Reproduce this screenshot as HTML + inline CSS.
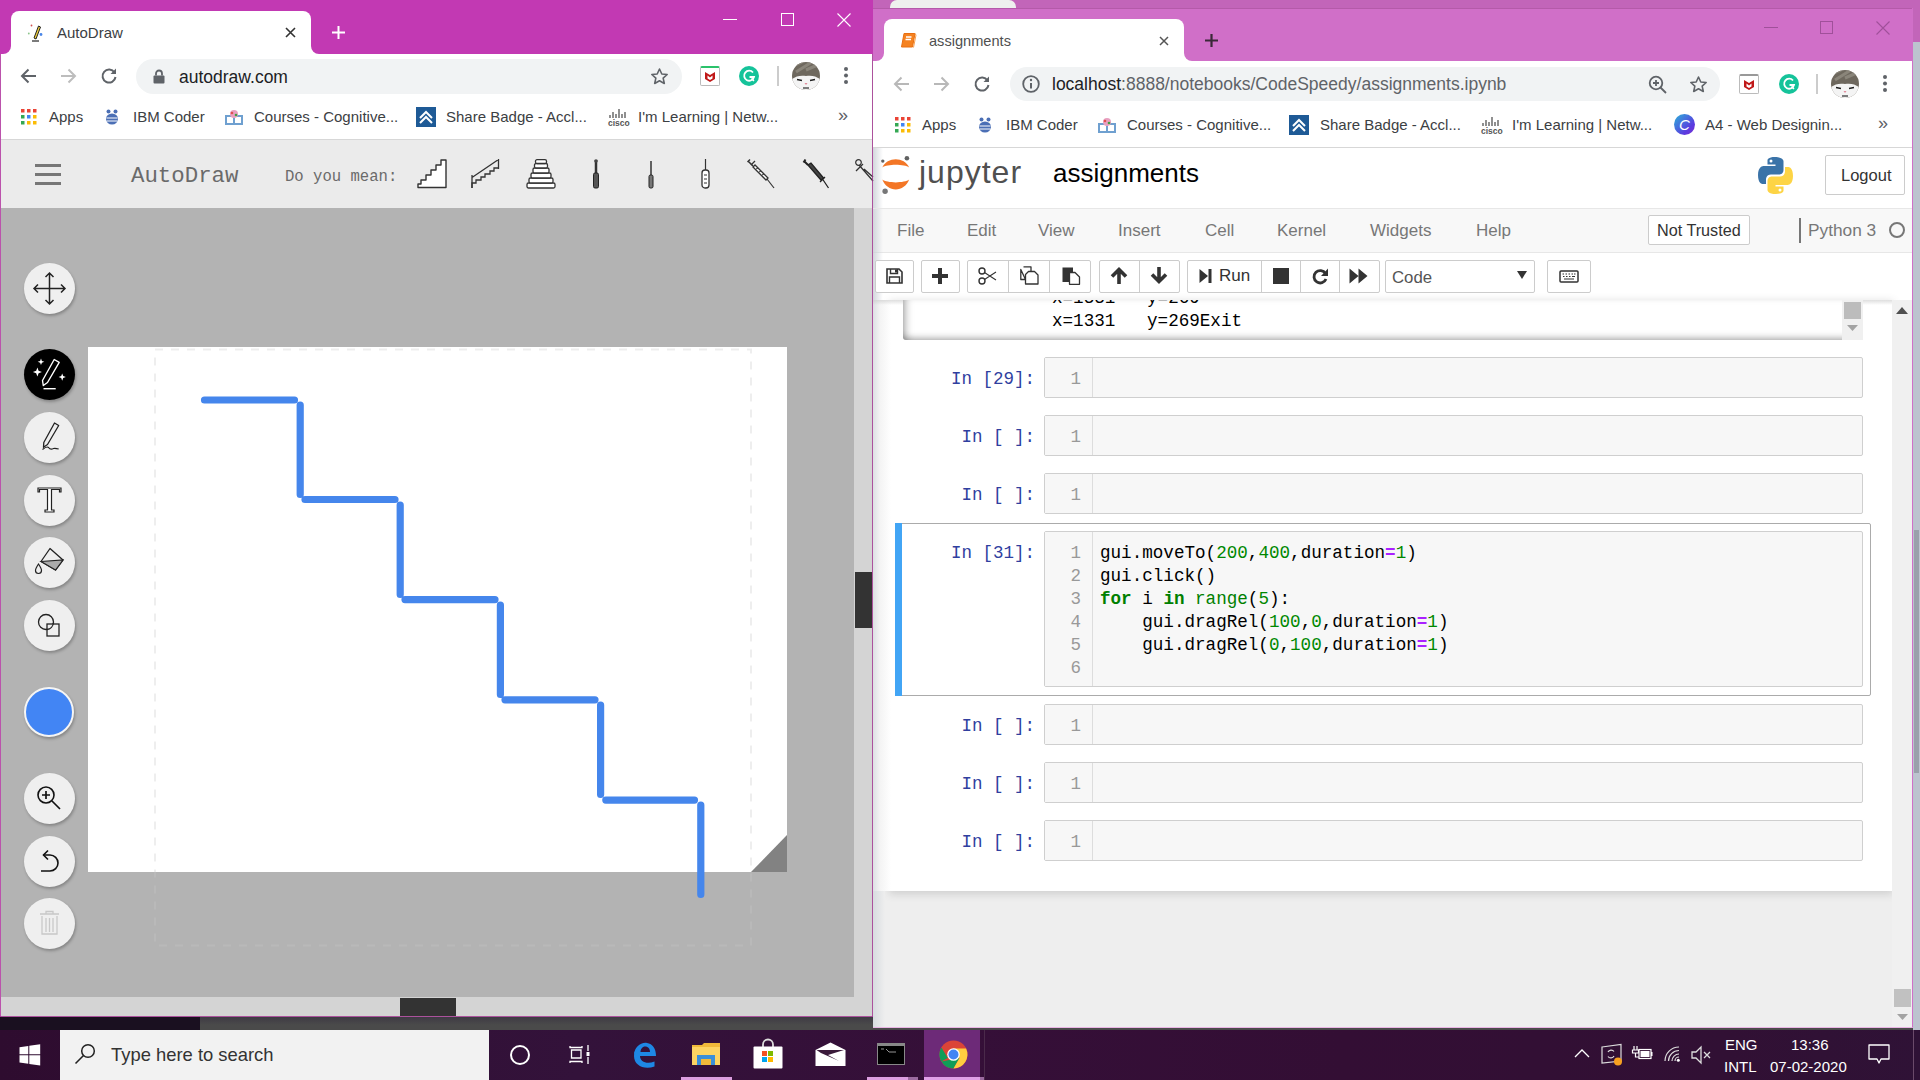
<!DOCTYPE html>
<html><head><meta charset="utf-8">
<style>
*{margin:0;padding:0;box-sizing:border-box}
html,body{width:1920px;height:1080px;overflow:hidden;background:#c46cbe;font-family:"Liberation Sans",sans-serif}
.a{position:absolute}
.t{position:absolute;white-space:nowrap;line-height:1}
.mono{font-family:"Liberation Mono",monospace}
svg{position:absolute;overflow:visible}
.tool{position:absolute;left:24px;width:51px;height:51px;border-radius:50%;background:#efefef;box-shadow:1px 2px 3px rgba(0,0,0,.25)}
.bm{position:absolute;font-size:15px;color:#3c4043;white-space:nowrap;line-height:1}
.jb{position:absolute;top:260px;height:33px;border:1px solid #ccc;border-radius:2px;background:#fff}
.prm{position:absolute;margin-top:2px;left:930px;width:105px;text-align:right;font-size:17.5px;color:#303f9f;white-space:pre;line-height:1}
.cb{position:absolute;left:1044px;width:819px;height:41px;background:#f7f7f7;border:1px solid #cfcfcf;border-radius:2px}
.gut{position:absolute;left:0;top:0;width:48px;height:100%;background:#f7f7f7;border-right:1px solid #ddd}
.ln{position:absolute;margin-top:2px;left:0;width:36px;text-align:right;font-size:17.5px;color:#999;line-height:1}
.code{position:absolute;margin-top:2px;left:55px;font-size:17.6px;color:#000;white-space:pre;line-height:1}
.n{color:#080}.o{color:#aa22ff;font-weight:bold}.k{color:#008000;font-weight:bold}.b{color:#008000}
</style></head><body>

<!-- ============ background strip / third window ============ -->
<div class="a" style="left:873px;top:0;width:1047px;height:9px;background:#c265b9"></div>
<div class="a" style="left:890px;top:0;width:126px;height:8px;background:#eef0ee;border-radius:7px 7px 0 0"></div>
<div class="a" style="left:1912px;top:0;width:8px;height:42px;background:#c265b9"></div>
<div class="a" style="left:1912px;top:42px;width:8px;height:988px;background:#bcc3cf"></div>
<div class="a" style="left:1914px;top:530px;width:5px;height:243px;background:#9aa0ab"></div>

<!-- ============ RIGHT WINDOW ============ -->
<div id="rw" class="a" style="left:873px;top:8px;width:1040px;height:1020px;background:#eeeeee;border-right:1px solid #d070c8;border-bottom:1px solid #e9b4e4"></div>
<!-- title bar -->
<div class="a" style="left:873px;top:8px;width:1039px;height:53px;background:#d06fc8;border-top:1px solid #b45aa9"></div>
<!-- R tab -->
<div class="a" style="left:884px;top:19px;width:300px;height:42px;background:#fff;border-radius:8px 8px 0 0"></div>
<div class="a" style="left:873px;top:52px;width:11px;height:9px;background:#fff"></div>
<div class="a" style="left:873px;top:44px;width:11px;height:17px;background:#d06fc8;border-radius:0 0 8px 0"></div>
<div class="a" style="left:1184px;top:52px;width:10px;height:9px;background:#fff"></div>
<div class="a" style="left:1184px;top:44px;width:10px;height:17px;background:#d06fc8;border-radius:0 0 0 8px"></div>
<svg style="left:900px;top:32px" width="17" height="17" viewBox="0 0 17 17"><path d="M4 1.5H15L12.5 15H1.5Z" fill="#f58220" stroke="#e86e10" stroke-width="1" stroke-linejoin="round"/><path d="M6 5H11.5M5.5 7.5H11" stroke="#fff" stroke-width="1.3"/><path d="M15 1.5L16 3L13.5 15.5" fill="none" stroke="#f9a050" stroke-width="1"/></svg>
<div class="t" style="left:929px;top:34px;font-size:14.6px;color:#505050">assignments</div>
<svg style="left:1159px;top:36px" width="10" height="10"><path d="M1 1L9 9M9 1L1 9" stroke="#555" stroke-width="1.5"/></svg>
<svg style="left:1204px;top:33px" width="15" height="15"><path d="M7.5 1V14M1 7.5H14" stroke="#3a2838" stroke-width="2.2"/></svg>
<svg style="left:1764px;top:27px" width="15" height="2"><path d="M0 0.5H14" stroke="#a0509a" stroke-width="1"/></svg>
<div class="a" style="left:1820px;top:21px;width:13px;height:13px;border:1px solid #a0509a"></div>
<svg style="left:1876px;top:21px" width="14" height="14"><path d="M0.5 0.5L13.5 13.5M13.5 0.5L0.5 13.5" stroke="#a0509a" stroke-width="1.1"/></svg>
<!-- R toolbar -->
<div class="a" style="left:873px;top:61px;width:1039px;height:86px;background:#fff"></div>
<svg style="left:893px;top:76px" width="17" height="16"><path d="M16 8H2M8.5 1.5L2 8l6.5 6.5" fill="none" stroke="#b8b8b8" stroke-width="2"/></svg>
<svg style="left:933px;top:76px" width="17" height="16"><path d="M1 8H15M8.5 1.5L15 8l-6.5 6.5" fill="none" stroke="#b8b8b8" stroke-width="2"/></svg>
<svg style="left:973px;top:75px" width="18" height="18"><path d="M14.5 5.5A6.5 6.5 0 1 0 15.5 10" fill="none" stroke="#5f6368" stroke-width="2"/><path d="M16 1.5V7H10.5Z" fill="#5f6368"/></svg>
<div class="a" style="left:1010px;top:67px;width:710px;height:34px;background:#f1f3f4;border-radius:17px"></div>
<svg style="left:1021px;top:74px" width="20" height="20"><circle cx="10" cy="10" r="7.8" fill="none" stroke="#5f6368" stroke-width="1.8"/><path d="M10 9V14.5" stroke="#5f6368" stroke-width="2"/><circle cx="10" cy="6" r="1.2" fill="#5f6368"/></svg>
<div class="t" style="left:1052px;top:76px;font-size:17.5px;color:#5f6368"><span style="color:#202124">localhost</span>:8888/notebooks/CodeSpeedy/assignments.ipynb</div>
<svg style="left:1648px;top:75px" width="20" height="20"><circle cx="8" cy="8" r="6.3" fill="none" stroke="#5f6368" stroke-width="1.8"/><path d="M8 5V11M5 8H11M12.5 12.5L18 18" stroke="#5f6368" stroke-width="1.8"/></svg>
<svg style="left:1689px;top:75px" width="19" height="19" viewBox="0 0 24 24"><path d="M12 2.5l2.9 6.3 6.8.7-5.1 4.6 1.5 6.7L12 17.3l-6.1 3.5 1.5-6.7-5.1-4.6 6.8-.7z" fill="none" stroke="#5f6368" stroke-width="2" stroke-linejoin="round"/></svg>
<div class="a" style="left:1739px;top:74px;width:20px;height:20px;border:1px solid #bbb;border-top:2px solid #999;background:#fff;border-radius:2px"></div>
<svg style="left:1742px;top:78px" width="14" height="13"><path d="M2 2L7 5L12 2V9L7 12L2 9Z" fill="#c01818"/><path d="M4.5 5.5L7 7.5L9.5 5.5V8.5L7 10L4.5 8.5Z" fill="#fff"/></svg>
<div class="a" style="left:1779px;top:74px;width:20px;height:20px;border-radius:50%;background:#15c39a"></div>
<svg style="left:1779px;top:74px" width="20" height="20"><path d="M14 6.5A5 5 0 1 0 15 11H10.5" fill="none" stroke="#fff" stroke-width="1.8"/><path d="M12.5 12.5L15 15" stroke="#fff" stroke-width="1.5"/></svg>
<div class="a" style="left:1816px;top:74px;width:2px;height:20px;background:#ccc"></div>
<svg style="left:1831px;top:70px" width="28" height="28" viewBox="0 0 28 28"><defs><clipPath id="c1831"><circle cx="14" cy="14" r="14"/></clipPath></defs><g clip-path="url(#c1831)"><rect width="28" height="28" fill="#6e685e"/><path d="M0 4L10 0M4 10L20 0M14 8L28 2" stroke="#8a857a" stroke-width="3"/><path d="M0 28V17C4 14 9 13 14 14C19 13 24 14 28 17V28Z" fill="#f4f4f4"/><path d="M5 17.5L10 18.5M18 18.5L23 17.5" stroke="#222" stroke-width="1.6"/><path d="M12.5 21H15.5L14 23Z" fill="#e08a9a"/><path d="M11 26H17" stroke="#555" stroke-width="1.5"/></g></svg>
<div class="a" style="left:1883px;top:75px;width:4px;height:4px;border-radius:50%;background:#5f6368;box-shadow:0 6.5px 0 #5f6368,0 13px 0 #5f6368"></div>
<!-- R bookmarks -->
<svg style="left:894px;top:116px" width="18" height="18"><g>
<rect x="1" y="1" width="3.5" height="3.5" fill="#ea4335"/><rect x="7" y="1" width="3.5" height="3.5" fill="#ea4335"/><rect x="13" y="1" width="3.5" height="3.5" fill="#ea4335"/>
<rect x="1" y="7" width="3.5" height="3.5" fill="#34a853"/><rect x="7" y="7" width="3.5" height="3.5" fill="#4285f4"/><rect x="13" y="7" width="3.5" height="3.5" fill="#fbbc05"/>
<rect x="1" y="13" width="3.5" height="3.5" fill="#34a853"/><rect x="7" y="13" width="3.5" height="3.5" fill="#fbbc05"/><rect x="13" y="13" width="3.5" height="3.5" fill="#fbbc05"/></g></svg>
<div class="bm" style="left:922px;top:117px">Apps</div>
<svg style="left:977px;top:117px" width="16" height="16"><ellipse cx="8" cy="10" rx="6" ry="5.5" fill="#4b6fb5"/><path d="M2.5 9H13.5M2.5 12H13.5" stroke="#fff" stroke-width="1"/><circle cx="4.5" cy="2.5" r="2" fill="#4b6fb5"/><circle cx="11.5" cy="2.5" r="2" fill="#4b6fb5"/></svg>
<div class="bm" style="left:1006px;top:117px">IBM Coder</div>
<svg style="left:1097px;top:116px" width="20" height="18"><rect x="1" y="7" width="18" height="10" fill="#6fa0d0"/><path d="M3 9H9V15H3ZM11 9H17V15H11Z" fill="#fff"/><circle cx="10" cy="6" r="4" fill="#e8a0c0"/><circle cx="8" cy="5" r="1.3" fill="#e05050"/><circle cx="12" cy="7" r="1.3" fill="#40a040"/></svg>
<div class="bm" style="left:1127px;top:117px">Courses - Cognitive...</div>
<svg style="left:1289px;top:115px" width="20" height="20"><rect width="20" height="20" fill="#1e5a96"/><path d="M4 11L10 5L16 11M4 16L10 10L16 16" fill="none" stroke="#fff" stroke-width="2"/></svg>
<div class="bm" style="left:1320px;top:117px">Share Badge - Accl...</div>
<svg style="left:1481px;top:116px" width="20" height="18"><g stroke="#555" stroke-width="1.3"><path d="M2 7V10M5 4V10M8 6V10M11 1V10M14 6V10M17 4V10"/></g><text x="0" y="17.5" font-size="8.5" font-family="Liberation Sans" font-weight="bold" fill="#555">cisco</text></svg>
<div class="bm" style="left:1512px;top:117px">I'm Learning | Netw...</div>
<div class="a" style="left:1674px;top:114px;width:21px;height:21px;border-radius:50%;background:linear-gradient(135deg,#2bb3d8,#5a3be0 70%,#7b2fd0)"></div>
<div class="t" style="left:1679px;top:117px;font-size:15px;color:#fff;font-style:italic">C</div>
<div class="bm" style="left:1705px;top:117px">A4 - Web Designin...</div>
<div class="t" style="left:1878px;top:114px;font-size:18px;color:#5f6368">»</div>
<div class="a" style="left:873px;top:147px;width:1039px;height:1px;background:#d7d7d7"></div>
<!-- Jupyter header -->
<div class="a" style="left:873px;top:148px;width:1039px;height:61px;background:#fff"></div>
<div class="a" style="left:873px;top:148px;width:10px;height:61px;background:linear-gradient(90deg,rgba(200,205,212,.8),rgba(255,255,255,0))"></div>
<svg style="left:880px;top:156px" width="32" height="38" viewBox="0 0 32 38"><path d="M2.3 11.6C7 0.5 24.5 0.5 29.2 11.6C24.5 7.9 7 7.9 2.3 11.6Z" fill="#f37626"/><path d="M2.3 23.6C7 36.7 24.5 36.7 29.2 23.6C24.5 27.3 7 27.3 2.3 23.6Z" fill="#f37626"/><circle cx="26.9" cy="2.3" r="2.3" fill="#616262"/><circle cx="2.8" cy="5.1" r="1.7" fill="#616262"/><circle cx="5.1" cy="35.2" r="2.7" fill="#767677"/></svg>
<div class="t" style="left:919px;top:155.5px;font-size:32px;letter-spacing:1px;color:#505050">jupyter</div>
<div class="t" style="left:1053px;top:160px;font-size:26px;color:#000">assignments</div>
<svg style="left:1756px;top:156px" width="39" height="39" viewBox="0 0 39 39"><path d="M19 1C11 1 11.5 4.5 11.5 4.5V8.5H19.5V10H8C8 10 2 9.5 2 19C2 28.5 7 28 7 28H10V23.5C10 23.5 10 18.5 15 18.5H23C23 18.5 27.5 18.5 27.5 14V5.5C27.5 5.5 28 1 19 1Z" fill="#3a73a8"/><circle cx="15" cy="5" r="1.5" fill="#fff"/><path d="M20 38C28 38 27.5 34.5 27.5 34.5V30.5H19.5V29H31C31 29 37 29.5 37 20C37 10.5 32 11 32 11H29V15.5C29 15.5 29 20.5 24 20.5H16C16 20.5 11.5 20.5 11.5 25V33.5C11.5 33.5 11 38 20 38Z" fill="#fdd445"/><circle cx="24" cy="34" r="1.5" fill="#fff"/></svg>
<div class="a" style="left:1825px;top:155px;width:80px;height:40px;border:1px solid #ccc;border-radius:2px;background:#fff"></div>
<div class="t" style="left:1841px;top:167px;font-size:16.5px;color:#333">Logout</div>
<div class="a" style="left:873px;top:208px;width:1039px;height:1px;background:#e7e7e7"></div>
<!-- menubar -->
<div class="a" style="left:873px;top:209px;width:1039px;height:44px;background:#f8f8f8;border-bottom:1px solid #e7e7e7"></div>
<div class="a" style="left:873px;top:209px;width:10px;height:44px;background:linear-gradient(90deg,rgba(200,205,212,.8),rgba(255,255,255,0))"></div>
<div class="t" style="left:897px;top:222px;font-size:17px;color:#777">File</div>
<div class="t" style="left:967px;top:222px;font-size:17px;color:#777">Edit</div>
<div class="t" style="left:1038px;top:222px;font-size:17px;color:#777">View</div>
<div class="t" style="left:1118px;top:222px;font-size:17px;color:#777">Insert</div>
<div class="t" style="left:1205px;top:222px;font-size:17px;color:#777">Cell</div>
<div class="t" style="left:1277px;top:222px;font-size:17px;color:#777">Kernel</div>
<div class="t" style="left:1370px;top:222px;font-size:17px;color:#777">Widgets</div>
<div class="t" style="left:1476px;top:222px;font-size:17px;color:#777">Help</div>
<div class="a" style="left:1648px;top:215px;width:102px;height:30px;border:1px solid #ccc;border-radius:2px;background:#fff"></div>
<div class="t" style="left:1657px;top:222px;font-size:16.2px;color:#333">Not Trusted</div>
<div class="a" style="left:1799px;top:218px;width:2px;height:25px;background:#777"></div>
<div class="t" style="left:1808px;top:222px;font-size:17.3px;color:#777">Python 3</div>
<div class="a" style="left:1889px;top:222px;width:16px;height:16px;border:2.2px solid #777;border-radius:50%"></div>
<!-- toolbar -->
<div class="a" style="left:873px;top:253px;width:1039px;height:47px;background:#fff"></div>
<div class="a" style="left:873px;top:253px;width:10px;height:47px;background:linear-gradient(90deg,rgba(200,205,212,.8),rgba(255,255,255,0))"></div>
<div class="jb" style="left:875px;width:39px"></div>
<svg style="left:886px;top:268px" width="17" height="16" viewBox="0 0 17 16"><path d="M1 1H13L16 4V15H1Z" fill="none" stroke="#333" stroke-width="1.6"/><path d="M4.5 1V5.5H11.5V1" fill="none" stroke="#333" stroke-width="1.4"/><path d="M3.5 15V9H13.5V15" fill="none" stroke="#333" stroke-width="1.4"/><rect x="9" y="1.5" width="2" height="3" fill="#333"/></svg>
<div class="jb" style="left:921px;width:39px"></div>
<svg style="left:930px;top:266px" width="20" height="20"><path d="M10 2V18M2 10H18" stroke="#333" stroke-width="4"/></svg>
<div class="jb" style="left:967px;width:124px"></div>
<div class="a" style="left:1008px;top:260px;width:1px;height:33px;background:#ccc"></div>
<div class="a" style="left:1049px;top:260px;width:1px;height:33px;background:#ccc"></div>
<svg style="left:978px;top:267px" width="19" height="18" viewBox="0 0 19 18"><circle cx="4" cy="4" r="3" fill="none" stroke="#333" stroke-width="1.4"/><circle cx="4" cy="14" r="3" fill="none" stroke="#333" stroke-width="1.4"/><path d="M6.5 5.5L18 13M6.5 12.5L18 5" stroke="#333" stroke-width="1.1"/></svg>
<svg style="left:1020px;top:266px" width="19" height="19" viewBox="0 0 19 19"><path d="M3.5 0.8H11V5.5M5.5 13.5H0.8V3.5Z" fill="none" stroke="#333" stroke-width="1.3" stroke-linejoin="round"/><path d="M8.5 5.5H14.5L18 9V18H5.5V8.5Z" fill="#fff" stroke="#333" stroke-width="1.3" stroke-linejoin="round"/></svg>
<svg style="left:1062px;top:266px" width="19" height="19" viewBox="0 0 19 19"><path d="M0.5 1.5H11V6H7V16H0.5Z" fill="#333"/><path d="M7.5 6.5H13L17.5 11V18.3H7.5Z" fill="#fff" stroke="#333" stroke-width="1.3" stroke-linejoin="round"/></svg>
<div class="jb" style="left:1099px;width:81px"></div>
<div class="a" style="left:1139px;top:260px;width:1px;height:33px;background:#ccc"></div>
<svg style="left:1110px;top:267px" width="18" height="18"><path d="M9 17V3M2 9.5L9 2.5L16 9.5" fill="none" stroke="#333" stroke-width="3.6" stroke-linejoin="miter"/></svg>
<svg style="left:1150px;top:266px" width="18" height="18"><path d="M9 1V15M2 8.5L9 15.5L16 8.5" fill="none" stroke="#333" stroke-width="3.6"/></svg>
<div class="jb" style="left:1187px;width:193px"></div>
<div class="a" style="left:1261px;top:260px;width:1px;height:33px;background:#ccc"></div>
<div class="a" style="left:1300px;top:260px;width:1px;height:33px;background:#ccc"></div>
<div class="a" style="left:1339px;top:260px;width:1px;height:33px;background:#ccc"></div>
<svg style="left:1199px;top:268px" width="14" height="16"><path d="M0.5 1L9 8L0.5 15Z" fill="#333"/><rect x="9.5" y="1" width="3" height="14" fill="#333"/></svg>
<div class="t" style="left:1219px;top:267px;font-size:17px;color:#333">Run</div>
<div class="a" style="left:1273px;top:268px;width:16px;height:16px;background:#333"></div>
<svg style="left:1311px;top:267px" width="18" height="18"><path d="M14.5 6.5A6.2 6.2 0 1 0 15 12" fill="none" stroke="#333" stroke-width="2.8"/><path d="M17 1.5V9H10Z" fill="#333"/></svg>
<svg style="left:1349px;top:268px" width="20" height="16"><path d="M0.5 0.5L9.5 8L0.5 15.5ZM9.5 0.5L18.5 8L9.5 15.5Z" fill="#333"/></svg>
<div class="jb" style="left:1385px;width:150px"></div>
<div class="t" style="left:1392px;top:270px;font-size:16.8px;color:#555">Code</div>
<svg style="left:1516px;top:270px" width="12" height="10"><path d="M1 1H11L6 9Z" fill="#333"/></svg>
<div class="jb" style="left:1547px;width:44px"></div>
<svg style="left:1559px;top:270px" width="20" height="13" viewBox="0 0 20 13"><rect x="1" y="1" width="18" height="11" rx="1" fill="none" stroke="#333" stroke-width="1.5"/><path d="M3.5 4H5M6.5 4H8M9.5 4H11M12.5 4H14M15 4H16.5M4 6.5H5.5M7 6.5H8.5M10 6.5H11.5M13 6.5H16M5 9H15" stroke="#333" stroke-width="1.2"/></svg>
<!-- notebook area -->
<div class="a" style="left:873px;top:300px;width:1019px;height:727px;background:#eeeeee"></div>
<div class="a" style="left:890px;top:300px;width:1002px;height:591px;background:#fff;box-shadow:0 2px 8px 1px rgba(87,87,87,.2)"></div>
<div class="a" style="left:873px;top:300px;width:18px;height:591px;background:linear-gradient(90deg,#dde0e4,#f4f4f4 40%,#fff)"></div>
<div class="a" style="left:873px;top:891px;width:12px;height:136px;background:linear-gradient(90deg,#d8dce0,#eee)"></div>
<div class="a" style="left:873px;top:300px;width:1039px;height:5px;background:linear-gradient(rgba(200,200,200,.6),rgba(255,255,255,0))"></div>
<!-- output area -->
<div class="a" style="left:903px;top:300px;width:960px;height:40px;background:#fff;border-radius:0 0 3px 3px;box-shadow:inset 7px 0 8px -5px rgba(0,0,0,.35),inset 0 -6px 7px -4px rgba(0,0,0,.3);overflow:hidden">
 <div class="t mono" style="left:149px;top:-10px;font-size:17.6px;color:#000;white-space:pre">x=1331   y=269</div>
 <div class="t mono" style="left:149px;top:13px;font-size:17.6px;color:#000;white-space:pre">x=1331   y=269Exit</div>
</div>
<div class="a" style="left:1842px;top:300px;width:21px;height:40px;background:#f0f0f0"></div>
<div class="a" style="left:1844px;top:302px;width:17px;height:17px;background:#bcbcbc"></div>
<svg style="left:1847px;top:325px" width="11" height="6"><path d="M0 0H11L5.5 6Z" fill="#a3a3a3"/></svg>
<!-- cells -->
<div class="prm mono" style="top:369px">In [29]:</div>
<div class="cb" style="top:357px"><div class="gut"></div><div class="ln mono" style="top:11px">1</div></div>
<div class="prm mono" style="top:427px">In [&nbsp;]:</div>
<div class="cb" style="top:415px"><div class="gut"></div><div class="ln mono" style="top:11px">1</div></div>
<div class="prm mono" style="top:485px">In [&nbsp;]:</div>
<div class="cb" style="top:473px"><div class="gut"></div><div class="ln mono" style="top:11px">1</div></div>
<!-- active cell -->
<div class="a" style="left:895px;top:523px;width:976px;height:173px;border:1px solid #ababab;border-radius:2px"></div>
<div class="a" style="left:895px;top:523px;width:7px;height:173px;background:#42a5f5"></div>
<div class="prm mono" style="top:543px">In [31]:</div>
<div class="cb" style="top:531px;height:156px"><div class="gut"></div>
 <div class="ln mono" style="top:11px">1</div><div class="ln mono" style="top:34px">2</div><div class="ln mono" style="top:57px">3</div><div class="ln mono" style="top:80px">4</div><div class="ln mono" style="top:103px">5</div><div class="ln mono" style="top:126px">6</div>
 <div class="code mono" style="top:11px">gui.moveTo(<span class="n">200</span>,<span class="n">400</span>,duration<span class="o">=</span><span class="n">1</span>)</div>
 <div class="code mono" style="top:34px">gui.click()</div>
 <div class="code mono" style="top:57px"><span class="k">for</span> i <span class="k">in</span> <span class="b">range</span>(<span class="n">5</span>):</div>
 <div class="code mono" style="top:80px">    gui.dragRel(<span class="n">100</span>,<span class="n">0</span>,duration<span class="o">=</span><span class="n">1</span>)</div>
 <div class="code mono" style="top:103px">    gui.dragRel(<span class="n">0</span>,<span class="n">100</span>,duration<span class="o">=</span><span class="n">1</span>)</div>
</div>
<div class="prm mono" style="top:716px">In [&nbsp;]:</div>
<div class="cb" style="top:704px"><div class="gut"></div><div class="ln mono" style="top:11px">1</div></div>
<div class="prm mono" style="top:774px">In [&nbsp;]:</div>
<div class="cb" style="top:762px"><div class="gut"></div><div class="ln mono" style="top:11px">1</div></div>
<div class="prm mono" style="top:832px">In [&nbsp;]:</div>
<div class="cb" style="top:820px"><div class="gut"></div><div class="ln mono" style="top:11px">1</div></div>
<!-- page scrollbar -->
<div class="a" style="left:1892px;top:300px;width:20px;height:727px;background:#f0f0f0"></div>
<svg style="left:1896px;top:307px" width="12" height="7"><path d="M0 7H12L6 0Z" fill="#505050"/></svg>
<div class="a" style="left:1894px;top:989px;width:17px;height:18px;background:#c1c1c1"></div>
<svg style="left:1897px;top:1014px" width="11" height="6"><path d="M0 0H11L5.5 6Z" fill="#a3a3a3"/></svg>

<!-- ============ LEFT WINDOW ============ -->
<div id="lw" class="a" style="left:0;top:0;width:873px;height:1017px;background:#b3b3b3"></div>
<div class="a" style="left:0;top:0;width:873px;height:54px;background:#c239b3"></div>
<!-- L tab -->
<div class="a" style="left:11px;top:11px;width:300px;height:43px;background:#fff;border-radius:8px 8px 0 0"></div>
<div class="a" style="left:1px;top:45px;width:10px;height:9px;background:#fff"></div>
<div class="a" style="left:1px;top:37px;width:10px;height:17px;background:#c239b3;border-radius:0 0 8px 0"></div>
<div class="a" style="left:311px;top:45px;width:10px;height:9px;background:#fff"></div>
<div class="a" style="left:311px;top:37px;width:10px;height:17px;background:#c239b3;border-radius:0 0 0 8px"></div>
<svg style="left:26px;top:23px" width="20" height="20" viewBox="0 0 20 20"><path d="M8 15 L12.5 3 L14.5 4 L10 16 Z" fill="#f2d13c" stroke="#222" stroke-width="1"/><path d="M6 18 H13" stroke="#333" stroke-width="1.3"/><circle cx="15" cy="11.5" r="1.4" fill="#4a86e8"/><circle cx="2.8" cy="10.5" r="0.9" fill="#8bc48a"/><circle cx="5.5" cy="2.5" r="0.9" fill="#d05050"/></svg>
<div class="t" style="left:57px;top:25px;font-size:15px;color:#3c4043">AutoDraw</div>
<svg style="left:285px;top:27px" width="11" height="11"><path d="M1 1L10 10M10 1L1 10" stroke="#333" stroke-width="1.6"/></svg>
<svg style="left:331px;top:25px" width="15" height="15"><path d="M7.5 1V14M1 7.5H14" stroke="#fff" stroke-width="2"/></svg>
<svg style="left:723px;top:19px" width="15" height="2"><path d="M0 0.5H14" stroke="#fff" stroke-width="1"/></svg>
<div class="a" style="left:781px;top:13px;width:13px;height:13px;border:1px solid #fff"></div>
<svg style="left:837px;top:13px" width="14" height="14"><path d="M0.5 0.5L13.5 13.5M13.5 0.5L0.5 13.5" stroke="#fff" stroke-width="1.1"/></svg>
<!-- L toolbar -->
<div class="a" style="left:1px;top:54px;width:871px;height:85px;background:#fff"></div>
<svg style="left:20px;top:68px" width="17" height="16"><path d="M16 8H2M8.5 1.5L2 8l6.5 6.5" fill="none" stroke="#5f6368" stroke-width="2"/></svg>
<svg style="left:60px;top:68px" width="17" height="16"><path d="M1 8H15M8.5 1.5L15 8l-6.5 6.5" fill="none" stroke="#bdbdbd" stroke-width="2"/></svg>
<svg style="left:100px;top:67px" width="18" height="18"><path d="M14.5 5.5A6.5 6.5 0 1 0 15.5 10" fill="none" stroke="#5f6368" stroke-width="2"/><path d="M16 1.5V7H10.5Z" fill="#5f6368"/></svg>
<div class="a" style="left:136px;top:59px;width:546px;height:35px;background:#f1f3f4;border-radius:18px"></div>
<svg style="left:153px;top:69px" width="12" height="15"><path d="M3 6.5V4.5a3 3 0 0 1 6 0V6.5" fill="none" stroke="#5f6368" stroke-width="1.8"/><rect x="0.5" y="6.5" width="11" height="8" rx="1" fill="#5f6368"/></svg>
<div class="t" style="left:179px;top:69px;font-size:17.5px;color:#202124">autodraw.com</div>
<svg style="left:650px;top:67px" width="19" height="19" viewBox="0 0 24 24"><path d="M12 2.5l2.9 6.3 6.8.7-5.1 4.6 1.5 6.7L12 17.3l-6.1 3.5 1.5-6.7-5.1-4.6 6.8-.7z" fill="none" stroke="#5f6368" stroke-width="2" stroke-linejoin="round"/></svg>
<div class="a" style="left:700px;top:66px;width:20px;height:20px;border:1px solid #bbb;border-top:2px solid #2bc26b;background:#fff;border-radius:2px"></div>
<svg style="left:703px;top:70px" width="14" height="13"><path d="M2 2L7 5L12 2V9L7 12L2 9Z" fill="#c01818"/><path d="M4.5 5.5L7 7.5L9.5 5.5V8.5L7 10L4.5 8.5Z" fill="#fff"/></svg>
<div class="a" style="left:739px;top:66px;width:20px;height:20px;border-radius:50%;background:#15c39a"></div>
<svg style="left:739px;top:66px" width="20" height="20"><path d="M14 6.5A5 5 0 1 0 15 11H10.5" fill="none" stroke="#fff" stroke-width="1.8"/><path d="M12.5 12.5L15 15" stroke="#fff" stroke-width="1.5"/></svg>
<div class="a" style="left:777px;top:66px;width:2px;height:20px;background:#ccc"></div>
<svg style="left:792px;top:62px" width="28" height="28" viewBox="0 0 28 28"><defs><clipPath id="c792"><circle cx="14" cy="14" r="14"/></clipPath></defs><g clip-path="url(#c792)"><rect width="28" height="28" fill="#6e685e"/><path d="M0 4L10 0M4 10L20 0M14 8L28 2" stroke="#8a857a" stroke-width="3"/><path d="M0 28V17C4 14 9 13 14 14C19 13 24 14 28 17V28Z" fill="#f4f4f4"/><path d="M5 17.5L10 18.5M18 18.5L23 17.5" stroke="#222" stroke-width="1.6"/><path d="M12.5 21H15.5L14 23Z" fill="#e08a9a"/><path d="M11 26H17" stroke="#555" stroke-width="1.5"/></g></svg>
<div class="a" style="left:844px;top:67px;width:4px;height:4px;border-radius:50%;background:#5f6368;box-shadow:0 6.5px 0 #5f6368,0 13px 0 #5f6368"></div>
<!-- L bookmarks -->
<svg style="left:20px;top:108px" width="18" height="18"><g>
<rect x="1" y="1" width="3.5" height="3.5" fill="#ea4335"/><rect x="7" y="1" width="3.5" height="3.5" fill="#ea4335"/><rect x="13" y="1" width="3.5" height="3.5" fill="#ea4335"/>
<rect x="1" y="7" width="3.5" height="3.5" fill="#34a853"/><rect x="7" y="7" width="3.5" height="3.5" fill="#4285f4"/><rect x="13" y="7" width="3.5" height="3.5" fill="#fbbc05"/>
<rect x="1" y="13" width="3.5" height="3.5" fill="#34a853"/><rect x="7" y="13" width="3.5" height="3.5" fill="#fbbc05"/><rect x="13" y="13" width="3.5" height="3.5" fill="#fbbc05"/></g></svg>
<div class="bm" style="left:49px;top:109px">Apps</div>
<svg style="left:104px;top:109px" width="16" height="16"><ellipse cx="8" cy="10" rx="6" ry="5.5" fill="#4b6fb5"/><path d="M2.5 9H13.5M2.5 12H13.5" stroke="#fff" stroke-width="1"/><circle cx="4.5" cy="2.5" r="2" fill="#4b6fb5"/><circle cx="11.5" cy="2.5" r="2" fill="#4b6fb5"/></svg>
<div class="bm" style="left:133px;top:109px">IBM Coder</div>
<svg style="left:224px;top:108px" width="20" height="18"><rect x="1" y="7" width="18" height="10" fill="#6fa0d0"/><path d="M3 9H9V15H3ZM11 9H17V15H11Z" fill="#fff"/><circle cx="10" cy="6" r="4" fill="#e8a0c0"/><circle cx="8" cy="5" r="1.3" fill="#e05050"/><circle cx="12" cy="7" r="1.3" fill="#40a040"/></svg>
<div class="bm" style="left:254px;top:109px">Courses - Cognitive...</div>
<svg style="left:416px;top:107px" width="20" height="20"><rect width="20" height="20" fill="#1e5a96"/><path d="M4 11L10 5L16 11M4 16L10 10L16 16" fill="none" stroke="#fff" stroke-width="2"/></svg>
<div class="bm" style="left:446px;top:109px">Share Badge - Accl...</div>
<svg style="left:608px;top:108px" width="20" height="18"><g stroke="#555" stroke-width="1.3"><path d="M2 7V10M5 4V10M8 6V10M11 1V10M14 6V10M17 4V10"/></g><text x="0" y="17.5" font-size="8.5" font-family="Liberation Sans" font-weight="bold" fill="#555">cisco</text></svg>
<div class="bm" style="left:638px;top:109px">I'm Learning | Netw...</div>
<div class="t" style="left:838px;top:106px;font-size:18px;color:#5f6368">»</div>
<div class="a" style="left:1px;top:139px;width:871px;height:1px;background:#d7d7d7"></div>
<!-- AutoDraw header -->
<div class="a" style="left:1px;top:140px;width:871px;height:68px;background:#ebebeb"></div>
<div class="a" style="left:35px;top:164px;width:26px;height:3px;background:#777;box-shadow:0 9px 0 #777,0 18px 0 #777"></div>
<div class="t mono" style="left:131px;top:165px;font-size:22.4px;color:#6a6a6a">AutoDraw</div>
<div class="t mono" style="left:285px;top:169.5px;font-size:15.6px;color:#6a6a6a">Do you mean:</div>
<!-- suggestion icons -->
<svg style="left:417px;top:159px" width="30" height="30" viewBox="0 0 30 30"><path d="M1 28.5H29V1H24V6H19V11H14V16H9V21H4V25H1Z" fill="#fff" stroke="#333" stroke-width="1.4" stroke-linejoin="round"/></svg>
<svg style="left:471px;top:159px" width="31" height="30" viewBox="0 0 31 30"><path d="M1 29V24H5V21H10V18H14V15H19V12H23V9H28" fill="none" stroke="#333" stroke-width="1.3"/><path d="M1 18.5L27.5 0.5M1 16V29M27.5 0V10" fill="none" stroke="#333" stroke-width="1.3"/></svg>
<svg style="left:526px;top:159px" width="30" height="30" viewBox="0 0 30 30"><g fill="#fff" stroke="#333" stroke-width="1.3"><rect x="1" y="24" width="28" height="5" rx="1.5"/><rect x="3" y="19" width="24" height="5" rx="1.5"/><rect x="5" y="14" width="20" height="5" rx="1.5"/><rect x="7" y="9" width="16" height="5" rx="1.5"/><rect x="8.5" y="4.5" width="13" height="4.5" rx="1.5"/><rect x="9.5" y="0.7" width="11" height="3.8" rx="1.5"/></g></svg>
<svg style="left:591px;top:159px" width="10" height="30" viewBox="0 0 10 30"><path d="M5 1V15" stroke="#333" stroke-width="2.5"/><rect x="2.5" y="14" width="5" height="15" rx="1.5" fill="#555" stroke="#222" stroke-width="1"/><circle cx="5" cy="2" r="1.8" fill="#444"/></svg>
<svg style="left:646px;top:160px" width="10" height="30" viewBox="0 0 10 30"><path d="M5 1V17" stroke="#333" stroke-width="1.5"/><rect x="3" y="15" width="4" height="13" rx="1.5" fill="#777" stroke="#222" stroke-width="1"/></svg>
<svg style="left:700px;top:159px" width="11" height="30" viewBox="0 0 11 30"><path d="M5.5 0V12" stroke="#333" stroke-width="1.2"/><rect x="2" y="11" width="7" height="18" rx="3" fill="#fff" stroke="#333" stroke-width="1.3"/><path d="M4 16H7M4 20H7M4 24H7" stroke="#333" stroke-width="1"/></svg>
<svg style="left:747px;top:159px" width="28" height="30" viewBox="0 0 28 30"><path d="M1 2L6 7M3 0.5L0.5 3" stroke="#333" stroke-width="1.5"/><path d="M4 6L8 2M6 8L19 21L21 19L8 6Z" fill="#fff" stroke="#333" stroke-width="1.3"/><path d="M20 20L27 29" stroke="#333" stroke-width="1.2"/><path d="M9 10L11 9M12 13L14 12M15 16L17 15" stroke="#333" stroke-width="1"/></svg>
<svg style="left:803px;top:159px" width="26" height="30" viewBox="0 0 26 30"><path d="M1 2L5 6M2.5 0.5L0.5 3.5" stroke="#222" stroke-width="2"/><path d="M5 6L18 21L20.5 19L8 4Z" fill="#444" stroke="#222" stroke-width="1.3"/><path d="M19.5 20L25.5 29M17 23L22 18" stroke="#222" stroke-width="1.3"/></svg>
<svg style="left:855px;top:159px" width="20" height="30" viewBox="0 0 20 30"><circle cx="3.5" cy="3.5" r="2.8" fill="none" stroke="#333" stroke-width="1.2"/><path d="M4 6L18 22M1 12L8 5M9 10L18 18" stroke="#333" stroke-width="1.3"/></svg>
<!-- canvas -->
<div class="a" style="left:88px;top:347px;width:699px;height:525px;background:#fff"></div>
<svg style="left:0;top:0" width="1" height="1"><rect x="155" y="349.5" width="596" height="596" fill="none" stroke="rgba(200,200,200,.3)" stroke-width="2" stroke-dasharray="8 8"/></svg>
<svg style="left:751px;top:835px" width="36" height="37"><path d="M0 37L36 0V37Z" fill="#828282"/></svg>
<svg style="left:0;top:0" width="1" height="1"><g stroke="#4586ec" stroke-width="7.2" stroke-linecap="round" fill="none">
<path d="M204.5 400H294.5M300.2 405V494.5M305 499.5H395M400.2 505V594.5M405 599.6H495M500.4 605V694.5M505 699.8H595M600.6 705V794.5M605.8 800.1H694.5M700.8 805V894.5"/>
</g></svg>
<!-- tools -->
<div class="tool" style="top:263px"></div>
<svg style="left:24px;top:263px" width="51" height="51" viewBox="0 0 51 51"><path d="M25.5 10V41M10 25.5H41M21.5 14L25.5 10L29.5 14M21.5 37L25.5 41L29.5 37M14 21.5L10 25.5L14 29.5M37 21.5L41 25.5L37 29.5" fill="none" stroke="#222" stroke-width="1.5"/></svg>
<div class="tool" style="top:349px;background:#000"></div>
<svg style="left:24px;top:349px" width="51" height="51" viewBox="0 0 51 51"><path d="M30.2 10.5L35.2 13.3L23.5 33.5L19.3 36.5L18.5 31.5Z" fill="none" stroke="#fff" stroke-width="1.4" stroke-linejoin="round"/><path d="M19.5 39.7H31.7" stroke="#fff" stroke-width="1.4"/><path d="M17 9.5l0.9 2.4 2.4 0.9-2.4 0.9-0.9 2.4-0.9-2.4-2.4-0.9 2.4-0.9z" fill="#fff"/><path d="M13.4 18.5l1.2 3.3 3.3 1.2-3.3 1.2-1.2 3.3-1.2-3.3-3.3-1.2 3.3-1.2z" fill="#fff"/><path d="M38.2 24.5l1 2.6 2.6 1-2.6 1-1 2.6-1-2.6-2.6-1 2.6-1z" fill="#fff"/></svg>
<div class="tool" style="top:412px"></div>
<svg style="left:24px;top:412px" width="51" height="51" viewBox="0 0 51 51"><path d="M30.5 11L34.7 13.5L23.5 32.5L19.5 35.3L19.8 30.5Z" fill="none" stroke="#222" stroke-width="1.3" stroke-linejoin="round"/><path d="M18.5 37.5C21 35.5 23 34 24.5 35.5C26 37.5 27.5 37.5 29.5 36.5C31 36 33 36.5 34.7 37" fill="none" stroke="#222" stroke-width="1.2"/></svg>
<div class="tool" style="top:475px"></div>
<svg style="left:24px;top:475px" width="51" height="51" viewBox="0 0 51 51"><path d="M14 13H37V17H35.5V14.5H27.5V35H30V37H21V35H23.5V14.5H15.5V17H14Z" fill="#fff" stroke="#222" stroke-width="1.2"/></svg>
<div class="tool" style="top:537px"></div>
<svg style="left:24px;top:537px" width="51" height="51" viewBox="0 0 51 51"><path d="M26 11.5L39 23L31.5 33L17 24.5Z" fill="none" stroke="#222" stroke-width="1.3" stroke-linejoin="round"/><path d="M17 24.5L39 23L31.5 33Z" fill="#aaa" stroke="#222" stroke-width="1.1"/><path d="M14.5 27C14.5 27 11.5 31.5 11.5 33.5A3 3 0 0 0 17.5 33.5C17.5 31.5 14.5 27 14.5 27Z" fill="none" stroke="#222" stroke-width="1.2"/></svg>
<div class="tool" style="top:600px"></div>
<svg style="left:24px;top:600px" width="51" height="51" viewBox="0 0 51 51"><circle cx="22" cy="22" r="7.5" fill="none" stroke="#222" stroke-width="1.3"/><rect x="23" y="24" width="12" height="12" fill="#efefef" stroke="#222" stroke-width="1.3"/><path d="M29.5 22.7A7.5 7.5 0 0 1 23 29.5" fill="none" stroke="#222" stroke-width="1.3"/></svg>
<div class="a" style="left:24px;top:687px;width:50px;height:50px;border-radius:50%;background:#4285f4;border:2.5px solid #f5f5f5;box-shadow:1px 2px 3px rgba(0,0,0,.25)"></div>
<div class="tool" style="top:773px"></div>
<svg style="left:24px;top:773px" width="51" height="51" viewBox="0 0 51 51"><circle cx="22" cy="22" r="8" fill="none" stroke="#111" stroke-width="1.6"/><path d="M22 18V26M18 22H26M28 28L36 36" stroke="#111" stroke-width="1.7"/></svg>
<div class="tool" style="top:836px"></div>
<svg style="left:24px;top:836px" width="51" height="51" viewBox="0 0 51 51"><path d="M19.5 19H26A8 8 0 0 1 26 35H17" fill="none" stroke="#111" stroke-width="1.6"/><path d="M24 14.5L19.5 19L24 23.5" fill="none" stroke="#111" stroke-width="1.6"/></svg>
<div class="tool" style="top:898px"></div>
<svg style="left:24px;top:898px" width="51" height="51" viewBox="0 0 51 51"><g fill="none" stroke="#c8c8c8" stroke-width="1.3"><path d="M16 16H35M22 16V13.5H29V16M18 18V36H33V18M22 20V34M25.5 20V34M29 20V34"/></g></svg>
<!-- L scrollbars -->
<div class="a" style="left:854px;top:208px;width:18px;height:789px;background:#d4d4d4"></div>
<div class="a" style="left:855px;top:572px;width:17px;height:56px;background:#333"></div>
<div class="a" style="left:1px;top:997px;width:871px;height:19px;background:#d4d4d4"></div>
<div class="a" style="left:400px;top:998px;width:56px;height:18px;background:#333"></div>

<div class="a" style="left:0;top:54px;width:1px;height:963px;background:rgba(190,50,170,.75)"></div>
<div class="a" style="left:872px;top:54px;width:1px;height:963px;background:rgba(170,50,150,.75)"></div>
<div class="a" style="left:0;top:1016px;width:873px;height:1px;background:rgba(170,50,150,.75)"></div>
<!-- ============ TASKBAR ============ -->
<div class="a" style="left:0;top:1017px;width:873px;height:13px;background:linear-gradient(#3e3a44,#4a4a4a 60%,#4a4a4a)"></div>
<div class="a" style="left:873px;top:1028px;width:1040px;height:2px;background:#4a4a4a"></div>
<div class="a" style="left:0;top:1017px;width:200px;height:13px;background:#1a1020"></div>
<div class="a" style="left:0;top:1030px;width:1920px;height:50px;background:linear-gradient(90deg,#2e0c2f 0,#33123a 30%,#350f38 50%,#330e34 70%,#311034 90%,#2f1236 100%)"></div>
<svg style="left:19px;top:1044px" width="22" height="22" viewBox="0 0 22 22"><path d="M0.5 3.2L9.3 2V10.3H0.5ZM10.3 1.8L21.2 0.3V10.3H10.3ZM0.5 11.3H9.3V19.7L0.5 18.5ZM10.3 11.3H21.2V21.5L10.3 19.9Z" fill="#fff"/></svg>
<div class="a" style="left:60px;top:1030px;width:429px;height:50px;background:#f2f2f2"></div>
<svg style="left:74px;top:1043px" width="22" height="22"><circle cx="14" cy="8" r="6.3" fill="none" stroke="#222" stroke-width="1.5"/><path d="M9.5 12.5L1.5 20.5" stroke="#222" stroke-width="1.6"/></svg>
<div class="t" style="left:111px;top:1046px;font-size:18.4px;color:#333">Type here to search</div>
<div class="a" style="left:510px;top:1045px;width:20px;height:20px;border:2.5px solid #fff;border-radius:50%"></div>
<svg style="left:569px;top:1045px" width="22" height="19" viewBox="0 0 22 19"><path d="M1 1V2.5H13V1M1 18V16.5H13V18M2.5 5H12V13H2.5Z" fill="none" stroke="#fff" stroke-width="1.3"/><path d="M19 0V6M19 12V19" stroke="#fff" stroke-width="1.3"/><rect x="17.5" y="7" width="3" height="4" fill="#fff"/></svg>
<svg style="left:632px;top:1042px" width="25" height="26" viewBox="0 0 25 26"><path d="M24 14H8C8 20 15 22.5 22.5 19.5V24.5C12 28 2 23.5 2 14C2 5 9 0 15 1C20.5 2 24 6 24 14ZM8.5 10H18C18 6 15.5 4.5 13 4.5C10.5 4.5 8.5 7 8.5 10Z" fill="#1e88e5"/><path d="M2 12C3 7 7 3.5 11 3.5C7 5 5 8 4.5 10" fill="#1e88e5"/></svg>
<svg style="left:692px;top:1042px" width="28" height="24" viewBox="0 0 28 24"><path d="M0 3H10L12 1H28V23H0Z" fill="#f0b93a"/><path d="M0 5H28V23H0Z" fill="#fcd462"/><path d="M5 23V13H23V23H19V17H9V23Z" fill="#3a8fd8"/><rect x="9" y="17" width="10" height="6" fill="#f0b93a"/></svg>
<div class="a" style="left:681px;top:1077px;width:51px;height:3px;background:#dc9ee0"></div>
<svg style="left:753px;top:1039px" width="30" height="30" viewBox="0 0 30 30"><path d="M10 9V5.5A5 5 0 0 1 20 5.5V9" fill="none" stroke="#ddd" stroke-width="1.8"/><rect x="0.5" y="7.5" width="29" height="22" rx="1" fill="#fff"/><rect x="9" y="12" width="5" height="5" fill="#f25022"/><rect x="15" y="12" width="5" height="5" fill="#7fba00"/><rect x="9" y="18" width="5" height="5" fill="#00a4ef"/><rect x="15" y="18" width="5" height="5" fill="#ffb900"/></svg>
<svg style="left:815px;top:1042px" width="31" height="24" viewBox="0 0 31 24"><path d="M0.5 8L15.5 0.5L30.5 8V24H0.5Z" fill="#fff"/><path d="M1.5 8H29L13 13L24 19L6 11Z" fill="#3a1a3a"/></svg>
<div class="a" style="left:877px;top:1043px;width:28px;height:22px;background:#000;border:1.5px solid #888;border-top-width:3px"></div>
<svg style="left:881px;top:1048px" width="18" height="6"><path d="M0 1H3M5 1L8 4H15" stroke="#bbb" stroke-width="0.8" fill="none"/></svg>
<div class="a" style="left:867px;top:1077px;width:41px;height:3px;background:#dc9ee0"></div>
<div class="a" style="left:908px;top:1077px;width:10px;height:3px;background:#9c6aa0"></div>
<div class="a" style="left:924px;top:1030px;width:56px;height:50px;background:#6d2a78"></div>
<div class="a" style="left:924px;top:1077px;width:56px;height:3px;background:#e0a0e8"></div>
<div class="a" style="left:980px;top:1077px;width:5px;height:3px;background:#9c6aa0"></div>
<svg style="left:939px;top:1040px" width="29" height="29" viewBox="0 0 29 29"><circle cx="14.5" cy="14.5" r="14" fill="#db4437"/><path d="M14.5 14.5L2.4 21.5A14 14 0 0 1 2.4 7.5L8.5 17.5Z" fill="#0f9d58"/><path d="M2.4 21.5A14 14 0 0 0 14.5 28.5L20.5 18Z" fill="#0f9d58"/><path d="M14.5 8.5H27.1A14 14 0 0 1 14.5 28.5L20.5 18Z" fill="#ffcd40"/><circle cx="14.5" cy="14.5" r="6.3" fill="#fff"/><circle cx="14.5" cy="14.5" r="5" fill="#4285f4"/></svg>
<div class="a" style="left:984px;top:1030px;width:1px;height:50px;background:#4a2a4a"></div>
<!-- tray -->
<svg style="left:1574px;top:1049px" width="16" height="9"><path d="M1 8L8 1L15 8" fill="none" stroke="#fff" stroke-width="1.3"/></svg>
<svg style="left:1601px;top:1044px" width="22" height="22" viewBox="0 0 22 22"><path d="M1 3L20 0.5V17L1 19Z" fill="none" stroke="#ddd" stroke-width="1.2"/><path d="M7 8A3.5 3.5 0 0 1 13 7.5M13 12A3.5 3.5 0 0 1 7 12.5" fill="none" stroke="#ddd" stroke-width="1.2"/><circle cx="17" cy="17.5" r="4" fill="#f7a020"/></svg>
<svg style="left:1632px;top:1045px" width="22" height="16" viewBox="0 0 22 16"><path d="M2 1V5M5 1V5M0.5 5H6.5V8H0.5Z" stroke="#fff" fill="none" stroke-width="1.2"/><path d="M3.5 8V12H7" stroke="#fff" stroke-width="1.2" fill="none"/><rect x="7" y="4.5" width="12" height="9" fill="none" stroke="#fff" stroke-width="1.2"/><rect x="8.5" y="6" width="9" height="6" fill="#fff"/><rect x="19" y="7" width="1.5" height="4" fill="#fff"/></svg>
<svg style="left:1664px;top:1046px" width="19" height="17" viewBox="0 0 19 17"><path d="M1 15A14 14 0 0 1 15 1M4.5 15A10.5 10.5 0 0 1 15 4.5M8 15A7 7 0 0 1 15 8M11 15A4 4 0 0 1 15 11" fill="none" stroke="#ddd" stroke-width="1.2"/><circle cx="14.3" cy="14.3" r="1.5" fill="#fff"/></svg>
<svg style="left:1691px;top:1046px" width="21" height="18" viewBox="0 0 21 18"><path d="M1 6H5L10 1V17L5 12H1Z" fill="none" stroke="#ddd" stroke-width="1.3"/><path d="M13 6L19 12M19 6L13 12" stroke="#ddd" stroke-width="1.3"/></svg>
<div class="t" style="left:1725px;top:1037px;font-size:15px;color:#fff">ENG</div>
<div class="t" style="left:1724px;top:1059px;font-size:15px;color:#fff">INTL</div>
<div class="t" style="left:1791px;top:1037px;font-size:15px;color:#fff">13:36</div>
<div class="t" style="left:1770px;top:1059px;font-size:15px;color:#fff">07-02-2020</div>
<svg style="left:1868px;top:1044px" width="22" height="21" viewBox="0 0 22 21"><path d="M1 1H21V15H13L11 19L9 15H1Z" fill="none" stroke="#fff" stroke-width="1.3" stroke-linejoin="round"/></svg>
<div class="a" style="left:1913px;top:1030px;width:1px;height:50px;background:#6a4a6a"></div>

</body></html>
